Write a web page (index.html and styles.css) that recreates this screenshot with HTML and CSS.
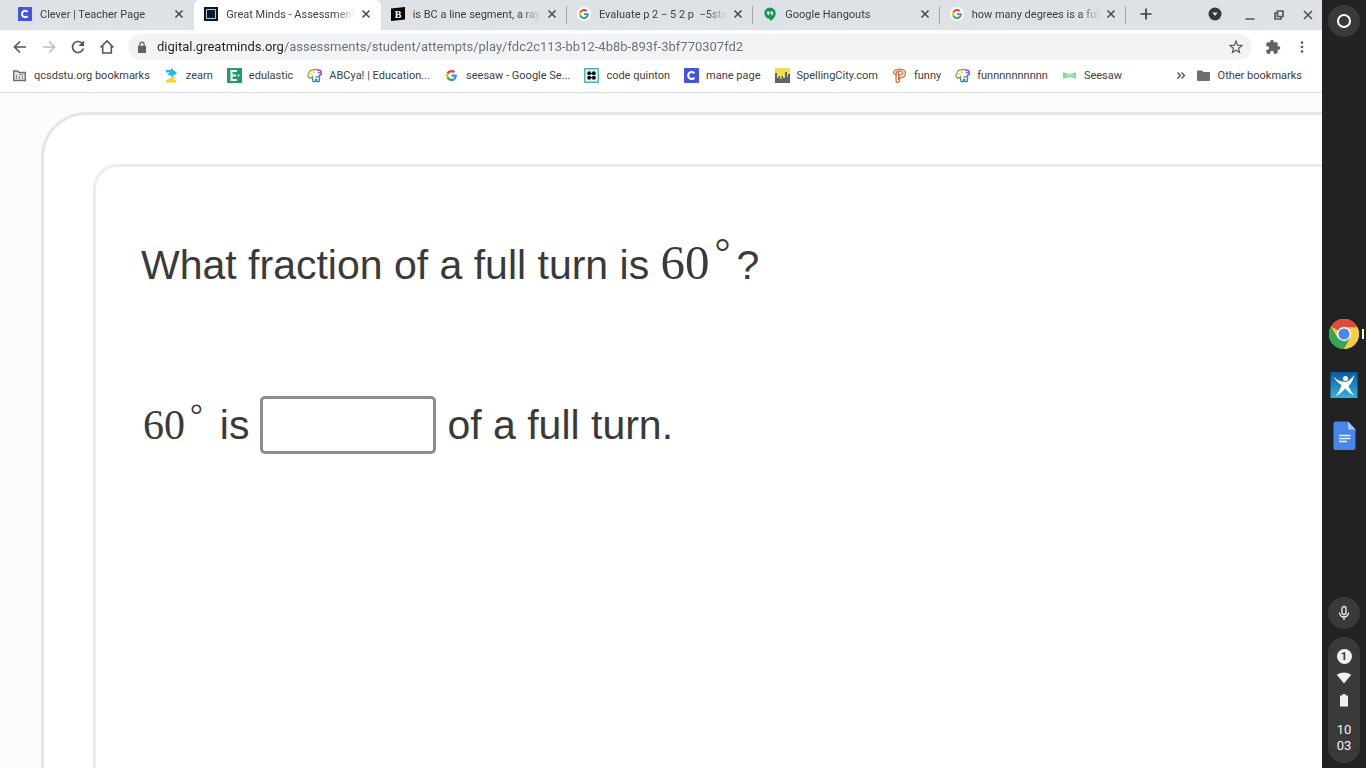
FILE: index.html
```html
<!DOCTYPE html>
<html lang="en">

<head>
    <meta charset="UTF-8">
    <meta name="viewport" content="width=device-width, initial-scale=1.0">
    <title>Great Minds - Assessments</title>
    <link rel="stylesheet" href="styles.css">
</head>

<body>
    <!-- shared icons -->
    <svg class="sprite" aria-hidden="true">
        <symbol id="i-google" viewBox="0 0 48 48">
            <path fill="#ea4335" d="M24 9.5c3.54 0 6.71 1.22 9.21 3.6l6.85-6.85C35.9 2.38 30.47 0 24 0 14.62 0 6.51 5.38 2.56 13.22l7.98 6.19C12.43 13.72 17.74 9.5 24 9.5z"/>
            <path fill="#4285f4" d="M46.98 24.55c0-1.57-.15-3.09-.38-4.55H24v9.02h12.94c-.58 2.96-2.26 5.48-4.78 7.18l7.73 6c4.51-4.18 7.09-10.36 7.09-17.65z"/>
            <path fill="#fbbc05" d="M10.53 28.59c-.48-1.45-.76-2.99-.76-4.59s.27-3.14.76-4.59l-7.98-6.19C.92 16.46 0 20.12 0 24c0 3.88.92 7.54 2.56 10.78l7.97-6.19z"/>
            <path fill="#34a853" d="M24 48c6.48 0 11.93-2.13 15.89-5.81l-7.73-6c-2.15 1.45-4.92 2.3-8.16 2.3-6.26 0-11.57-4.22-13.47-9.91l-7.98 6.19C6.51 42.62 14.62 48 24 48z"/>
        </symbol>
        <symbol id="i-clever" viewBox="0 0 16 16">
            <rect width="16" height="16" rx="1" fill="#4653dc"/>
            <path d="M11 5.6A3.7 3.7 0 1 0 11 10.4" fill="none" stroke="#fff" stroke-width="2.3"/>
        </symbol>
        <symbol id="i-close" viewBox="0 0 14 14">
            <path d="M3.5 3.5l7 7M10.5 3.5l-7 7" stroke="#45494d" stroke-width="1.5" fill="none"/>
        </symbol>
        <symbol id="i-abcya" viewBox="0 0 16 16" fill="none">
            <path d="M4 10.5C1 11 0 7.500 2 6c0-3 3-4.500 5-4 2-1.200 4-.5 4.500 1" stroke="#8f9a3a" stroke-width="1.300"/>
            <path d="M11 2.500c2-.8 4.500.3 4 2.200.8 1.800-.5 3.300-2.500 3" stroke="#b0359b" stroke-width="1.500"/>
            <path d="M11.500 5h3" stroke="#7a4fc4" stroke-width="1.200"/>
            <path d="M3 10.500c2 .5 3-.5 3.500-2" stroke="#d0654d" stroke-width="1.200"/>
            <path d="M3.500 6.500h3M6 4.500h3" stroke="#e2d65c" stroke-width="1.500"/>
            <path d="M5.500 10l1 4.500H9V12h1.500v2.500H13l.5-5H9" stroke="#2986b5" stroke-width="1.300"/>
        </symbol>
    </svg>

    <div class="desktop">
        <div class="browser">
            <header class="tab-strip">
                <nav class="tabs" aria-label="Tabs">
                    <div class="tab">
                        <svg class="favicon"><use href="#i-clever"/></svg>
                        <a href="#" class="tab-title">Clever | Teacher Page</a>
                        <button class="tab-close" aria-label="Close tab"><svg><use href="#i-close"/></svg></button>
                    </div>
                    <div class="tab active">
                        <svg class="favicon" viewBox="0 0 14 14">
                            <path d="M0 0h14v14H0z" fill="#081a26"/>
                            <path d="M2.500 2.500h9v9h-9z" fill="none" stroke="#b9cbd4"/>
                        </svg>
                        <a href="#" class="tab-title">Great Minds - Assessments</a>
                        <button class="tab-close" aria-label="Close tab"><svg><use href="#i-close"/></svg></button>
                    </div>
                    <div class="tab">
                        <svg class="favicon" viewBox="0 0 14 14">
                            <path d="M0 1.500L14 0v12.500L0 14z" fill="#050505"/>
                            <text x="7" y="11" class="mark-b">B</text>
                        </svg>
                        <a href="#" class="tab-title">is BC a line segment, a ray,</a>
                        <button class="tab-close" aria-label="Close tab"><svg><use href="#i-close"/></svg></button>
                    </div>
                    <div class="tab">
                        <svg class="favicon" viewBox="0 0 14 14">
                            <circle cx="7" cy="7" r="7" fill="#fff"/>
                            <use href="#i-google" x="2" y="2" width="10" height="10"/>
                        </svg>
                        <a href="#" class="tab-title">Evaluate p 2 − 5 2 p &nbsp;−5sta</a>
                        <button class="tab-close" aria-label="Close tab"><svg><use href="#i-close"/></svg></button>
                    </div>
                    <div class="tab">
                        <svg class="favicon" viewBox="0 0 14 14">
                            <path d="M7 .5a5.700 5.700 0 0 1 5.700 5.700c0 3.300-2.500 6.300-5.700 7.800v-2.100A5.700 5.700 0 0 1 7 .5z" fill="#12995a"/>
                            <path d="M4 4.600h2.400V7L5.300 8.400H4.600L5.200 7H4zM7.600 4.600H10V7L8.900 8.400h-.7L8.800 7H7.600z" fill="#fff"/>
                        </svg>
                        <a href="#" class="tab-title">Google Hangouts</a>
                        <button class="tab-close" aria-label="Close tab"><svg><use href="#i-close"/></svg></button>
                    </div>
                    <div class="tab">
                        <svg class="favicon" viewBox="0 0 14 14">
                            <circle cx="7" cy="7" r="7" fill="#fff"/>
                            <use href="#i-google" x="2" y="2" width="10" height="10"/>
                        </svg>
                        <a href="#" class="tab-title">how many degrees is a full</a>
                        <button class="tab-close" aria-label="Close tab"><svg><use href="#i-close"/></svg></button>
                    </div>
                </nav>
                <div class="window-controls">
                    <button class="new-tab" aria-label="New tab">
                        <svg viewBox="0 0 14 14"><path d="M7 1.500v11M1.500 7h11" stroke="#3c4043" stroke-width="1.700"/></svg>
                    </button>
                    <button class="search-tabs" aria-label="Search tabs">
                        <svg viewBox="0 0 14 14"><circle cx="7" cy="7" r="6.500" fill="#35383b"/><path d="M4.300 5.500h5.400L7 9z" fill="#dee1e6"/></svg>
                    </button>
                    <button aria-label="Minimize">
                        <svg viewBox="0 0 14 14"><path d="M2.500 12h9" stroke="#5f6368" stroke-width="1.700"/></svg>
                    </button>
                    <button aria-label="Restore">
                        <svg viewBox="0 0 14 14"><path d="M5.500 4h5.500v5.500H5.500zM5 6H3v6h6v-2" fill="none" stroke="#54585c" stroke-width="1.700"/></svg>
                    </button>
                    <button aria-label="Close window">
                        <svg viewBox="0 0 14 14"><path d="M3 4l8 8M11 4l-8 8" stroke="#54585c" stroke-width="1.700"/></svg>
                    </button>
                </div>
            </header>

            <div class="toolbar">
                <button aria-label="Back">
                    <svg viewBox="0 0 16 16"><path d="M14 8H3M8 2.500L2.500 8 8 13.500" fill="none" stroke="#54585c" stroke-width="1.700"/></svg>
                </button>
                <button aria-label="Forward" disabled>
                    <svg viewBox="0 0 16 16"><path d="M2 8h11M8 2.500L13.500 8 8 13.500" fill="none" stroke="#bcbec1" stroke-width="1.700"/></svg>
                </button>
                <button aria-label="Reload">
                    <svg viewBox="0 0 16 16"><path d="M13.300 9.500A5.500 5.500 0 1 1 12 4.200" fill="none" stroke="#54585c" stroke-width="1.700"/><path d="M14 1.500V7H8.500z" fill="#54585c"/></svg>
                </button>
                <button aria-label="Home">
                    <svg viewBox="0 0 16 16"><path d="M1.500 8.500L8 2l6.500 6.500M3.700 7v7h8.600V7" fill="none" stroke="#54585c" stroke-width="1.600"/></svg>
                </button>
                <div class="omnibox">
                    <svg class="lock" viewBox="0 0 12 12"><path d="M2 4.800h8V12H2z" fill="#5f6368"/><path d="M3.900 5V3.200a2.100 2.100 0 0 1 4.200 0V5" fill="none" stroke="#5f6368" stroke-width="1.200"/></svg>
                    <input type="text" class="address" aria-label="Address" value="digital.greatminds.org/assessments/student/attempts/play/fdc2c113-bb12-4b8b-893f-3bf770307fd2">
                    <button aria-label="Bookmark this page">
                        <svg viewBox="0 0 16 16"><path d="M8 2.200l1.600 4 4.300.3-3.300 2.800 1 4.200L8 11.200l-3.600 2.300 1-4.200-3.300-2.800 4.300-.3z" fill="none" stroke="#54585c" stroke-width="1.200"/></svg>
                    </button>
                </div>
                <button aria-label="Extensions">
                    <svg viewBox="0 0 24 24"><path d="M20.500 11H19V7c0-1.100-.9-2-2-2h-4V3.500a2.500 2.500 0 0 0-5 0V5H4c-1.100 0-2 .9-2 2v3.800h1.500a2.700 2.700 0 0 1 0 5.400H2V20c0 1.100.9 2 2 2h3.800v-1.500a2.700 2.700 0 0 1 5.400 0V22H17c1.100 0 2-.9 2-2v-4h1.500a2.500 2.500 0 0 0 0-5z" fill="#5f6368"/></svg>
                </button>
                <button aria-label="Menu">
                    <svg viewBox="0 0 16 16" fill="#54585c"><circle cx="8" cy="3.500" r="1.300"/><circle cx="8" cy="8" r="1.300"/><circle cx="8" cy="12.500" r="1.300"/></svg>
                </button>
            </div>

            <nav class="bookmarks" aria-label="Bookmarks">
                <a href="#">
                    <svg viewBox="0 0 15 15"><path d="M1.700 3h4l1.300 1.500h6.300v8H1.700z" fill="#e3e4e5" stroke="#6d7073" stroke-width="1.400"/><path d="M4.500 7v4M7 6.500h4M7.500 8v3M10.500 8v3" stroke="#8b8e91"/></svg>
                    qcsdstu.org bookmarks
                </a>
                <a href="#">
                    <svg viewBox="0 0 15 15"><path d="M2 2h5V0l6 5-6 4.500V7H3l3-2.500H2z" fill="#22b8e2"/><path d="M9.500 8.500L12 9.500 8 12h4v2.500H2V12.500z" fill="#fbd22c"/></svg>
                    zearn
                </a>
                <a href="#">
                    <svg viewBox="0 0 15 15"><path d="M0 0h15v15H0z" fill="#239b6c"/><path d="M10 3H4.500v9H10M4.500 7.500H9" fill="none" stroke="#fff" stroke-width="2"/><circle cx="11.500" cy="7.500" r="1" fill="#fff"/></svg>
                    edulastic
                </a>
                <a href="#"><svg><use href="#i-abcya"/></svg>ABCya! | Education...</a>
                <a href="#">
                    <svg viewBox="0 0 15 15"><use href="#i-google" x="2" y="2" width="11" height="11"/></svg>
                    seesaw - Google Se...
                </a>
                <a href="#">
                    <svg viewBox="0 0 15 15"><path d="M.7.7h13.600v13.600H.7z" fill="#e5f6f5" stroke="#56b3b2" stroke-width="1.400"/><path d="M4.500 5.500h6M4.500 9.500h6" stroke="#111"/><g fill="#111"><circle cx="5.200" cy="5.200" r="2"/><circle cx="9.800" cy="5.200" r="2"/><circle cx="5.200" cy="9.800" r="2"/><circle cx="9.800" cy="9.800" r="2"/></g></svg>
                    code quinton
                </a>
                <a href="#"><svg><use href="#i-clever"/></svg>mane page</a>
                <a href="#">
                    <svg viewBox="0 0 15 15"><path d="M0 0h15v15H0z" fill="#f0df4d"/><path d="M0 15V5h2v5h1.500V8H5v3h1.500V8H8v2h2V4h2v5h1V6h2v9z" fill="#53676e"/></svg>
                    SpellingCity.com
                </a>
                <a href="#">
                    <svg viewBox="0 0 15 15" fill="none" stroke="#dc6d42" stroke-width="1.300"><path d="M1.500 5.500C1 0 13.500-.5 13.500 5c0 4-4 5.500-6 4.500v3c0 2.500-3.500 2.500-3.500 0V6"/><path d="M4 7C3.500 2 10.500 2 10.500 5c0 2.500-3 2.500-4 1.500M6.500 4v8M1.500 5.500l2.500 1"/></svg>
                    funny
                </a>
                <a href="#"><svg><use href="#i-abcya"/></svg>funnnnnnnnnn</a>
                <a href="#">
                    <svg viewBox="0 0 15 15"><path d="M1 4l5.500 2h2L14 4v7L8.500 9h-2L1 11z" fill="#86dc9c"/><path d="M3 7.500h9" stroke="#c5e59a"/></svg>
                    Seesaw
                </a>
                <button class="overflow" aria-label="More bookmarks">
                    <svg viewBox="0 0 15 15"><path d="M4.500 4.500l3 3-3 3M8.500 4.500l3 3-3 3" fill="none" stroke="#45494d" stroke-width="1.300"/></svg>
                </button>
                <a href="#">
                    <svg viewBox="0 0 15 15"><path d="M1 3.500q0-1 1-1h4L7.500 4H13q1 0 1 1v7q0 1-1 1H2q-1 0-1-1z" fill="#6d7073"/></svg>
                    Other bookmarks
                </a>
            </nav>

            <main class="page">
                <section class="sheet">
                    <form class="question">
                        <p class="prompt">What fraction of a full turn is <span class="math">60<sup>°</sup></span>?</p>
                        <label class="answer" for="fraction">
                            <span class="math">60<sup>°</sup></span>
                            <span>is</span>
                            <input type="text" id="fraction">
                            <span>of a full turn.</span>
                        </label>
                    </form>
                </section>
            </main>
        </div>

        <aside class="shelf">
            <button class="round" aria-label="Launcher">
                <svg viewBox="0 0 16 16"><circle cx="8" cy="8" r="6" fill="none" stroke="#fff" stroke-width="2"/></svg>
            </button>
            <div class="apps">
                <button class="running" aria-label="Chrome">
                    <svg viewBox="0 0 48 48">
                        <circle cx="24" cy="24" r="24" fill="#fdcc3d"/>
                        <path d="M24 24L3.200 12A24 24 0 0 1 44.800 12z" fill="#e04a3f"/>
                        <path d="M3.200 12A24 24 0 0 0 24 48l10.400-18L24 24l-10.400 6z" fill="#35a457"/>
                        <path d="M24 13h21.300A24 24 0 0 1 24 48l10-18z" fill="#fdcc3d"/>
                        <circle cx="24" cy="24" r="11.500" fill="#f2f6fb"/>
                        <circle cx="24" cy="24" r="8.800" fill="#4a86e8"/>
                    </svg>
                </button>
                <button aria-label="Whiteboard">
                    <svg viewBox="0 0 30 30">
                        <defs>
                            <linearGradient id="board" x1="0" y1="0" x2="0" y2="1">
                                <stop offset="0" stop-color="#0c5a9e"/>
                                <stop offset="1" stop-color="#2fb4e2"/>
                            </linearGradient>
                        </defs>
                        <path d="M1.500 2h27v26h-27z" fill="url(#board)"/>
                        <path d="M4.500 6.500q4 4.500 8.500 5l4 .5Q22 10 25.500 4.500 24 12 19.500 16q2 5 5.500 9.500-5-2.500-9-7-4 5.500-9.500 7.500 4.500-5 6-11Q7 12 4.500 6.500z" fill="#fff"/>
                        <circle cx="16.500" cy="8.500" r="2.500" fill="#fff"/>
                    </svg>
                </button>
                <button aria-label="Docs">
                    <svg viewBox="0 0 30 30">
                        <path d="M6.500.5H19l7.500 8V27q0 2-2 2h-18q-2 0-2-2V2.500q0-2 2-2z" fill="#4986e8"/>
                        <path d="M19 .5l7.500 8H19z" fill="#a7c5f7"/>
                        <path d="M10 14.500h11.500M10 17.500h11.500M10 20.500h8" stroke="#e9f0fd" stroke-width="1.500"/>
                    </svg>
                </button>
            </div>
            <div class="status">
                <button class="round" aria-label="Dictation">
                    <svg viewBox="0 0 16 16" fill="none" stroke="#f1f1f1" stroke-width="1.300"><rect x="6" y="1.500" width="4" height="8" rx="2"/><path d="M3.500 7.500a4.500 4.500 0 0 0 9 0M8 12v3"/></svg>
                </button>
                <button class="tray" aria-label="Status tray">
                    <span class="count">1</span>
                    <svg viewBox="0 0 16 16"><path d="M.8 4.800Q8 0 15.200 4.800L8 13.500z" fill="#f1f1f1"/></svg>
                    <svg viewBox="0 0 16 16"><path d="M4 3.500h2.500V2h3v1.500H12V14.500H4z" fill="#f1f1f1"/></svg>
                    <time>10<br>03</time>
                </button>
            </div>
        </aside>
    </div>
</body>

</html>
```

FILE: styles.css
```css
:root {
    --strip: #dee1e6;
    --text: #3c4043;
    --shelf: #222222;
    --shelf-light: #3a3a3a;
}

* {
    box-sizing: border-box;
    margin: 0;
    padding: 0;
}

body {
    font-family: Roboto, "Liberation Sans", sans-serif;
    font-size: 11px;
    color: var(--text);
    background: #fff;
}

button {
    font: inherit;
    color: inherit;
    background: none;
    border: none;
    display: flex;
    align-items: center;
    justify-content: center;
    flex: none;
}

a {
    color: inherit;
    text-decoration: none;
}

svg {
    display: block;
    flex: none;
}

.sprite {
    position: absolute;
    width: 0;
    height: 0;
}

.desktop {
    display: flex;
    height: 100vh;
    overflow: hidden;
}

.browser {
    flex: 1;
    min-width: 0;
    display: flex;
    flex-direction: column;
}

/* tab strip */
.tab-strip {
    display: flex;
    height: 30px;
    padding-left: 8px;
    background: var(--strip);
}

.tabs {
    flex: 1;
    min-width: 0;
    display: flex;
}

.tab {
    flex: 1 1 0;
    min-width: 0;
    display: flex;
    align-items: center;
    padding: 0 8px 2px 10px;
    border-radius: 6px 6px 0 0;
    background: linear-gradient(#a3a6aa, #a3a6aa) right 6px / 1px 18px no-repeat;
}

.tab:first-child {
    background: none;
}

.tab.active {
    background: #fff;
}

.favicon {
    width: 14px;
    height: 14px;
    margin-right: 8px;
}

.tab-title {
    flex: 1;
    min-width: 0;
    margin-right: 4px;
    overflow: hidden;
    white-space: nowrap;
    -webkit-mask-image: linear-gradient(90deg, #000 calc(100% - 20px), transparent);
    mask-image: linear-gradient(90deg, #000 calc(100% - 20px), transparent);
}

.tab-close svg,
.window-controls svg {
    width: 14px;
    height: 14px;
}

.mark-b {
    font: bold 10px "Liberation Serif", serif;
    fill: #fff;
    text-anchor: middle;
}

.window-controls {
    width: 196px;
    display: flex;
    align-items: center;
    justify-content: flex-end;
    gap: 15px;
    padding: 0 7px 2px 13px;
}

.new-tab {
    margin-right: auto;
}

.search-tabs {
    margin-right: 6px;
}

/* toolbar */
.toolbar {
    display: flex;
    align-items: center;
    gap: 13px;
    height: 33px;
    padding: 0 12px;
}

.toolbar svg {
    width: 16px;
    height: 16px;
}

.omnibox {
    flex: 1;
    display: flex;
    align-items: center;
    height: 26px;
    padding: 0 8px;
    border-radius: 13px;
    background: #f1f3f4;
}

.omnibox .lock {
    width: 12px;
    height: 12px;
    margin-right: 9px;
}

/* the host part is darker than the path */
.address {
    flex: 1;
    min-width: 0;
    border: none;
    outline: none;
    font: 13px Roboto, "Liberation Sans", sans-serif;
    color: transparent;
    background: linear-gradient(90deg, #202124 126px, #6a6e73 126px);
    -webkit-background-clip: text;
    background-clip: text;
}

/* bookmarks bar */
.bookmarks {
    display: flex;
    align-items: center;
    gap: 14px;
    height: 30px;
    padding: 0 20px 4px 12px;
    border-bottom: 1px solid #dcdde0;
    white-space: nowrap;
}

.bookmarks a {
    display: flex;
    align-items: center;
    gap: 7px;
}

.bookmarks svg {
    width: 15px;
    height: 15px;
}

.overflow {
    margin-left: auto;
    margin-right: -6px;
}

/* assessment page */
.page {
    flex: 1;
    min-height: 0;
    display: flex;
    padding: 19px 0 0 41px;
    background: #fcfcfc;
}

.sheet {
    flex: 1;
    display: flex;
    padding: 49px 0 0 49px;
    border: solid #e5e5ea;
    border-width: 3px 0 0 3px;
    border-top-left-radius: 45px;
    background: #fff;
}

.question {
    flex: 1;
    padding: 67px 0 0 45px;
    border: solid #ededee;
    border-width: 3px 0 0 3px;
    border-top-left-radius: 24px;
    font-family: "Liberation Sans", Arial, sans-serif;
    font-size: 41px;
    line-height: 58px;
    color: #3a3a3a;
}

.math {
    font-family: "Liberation Serif", serif;
}

.math sup {
    padding: 0 6px 0 5px;
    line-height: 0;
    vertical-align: 13px;
}

.prompt {
    height: 58px;
}

.prompt .math {
    font-size: 49px;
}

.prompt sup {
    font-size: 40px;
}

.answer {
    display: flex;
    align-items: center;
    gap: 11px;
    margin-top: 104px;
}

.answer .math {
    padding-left: 2px;
    font-size: 42px;
}

.answer sup {
    font-size: 32px;
}

.answer input {
    width: 176px;
    height: 58px;
    padding: 0 10px;
    border: 3px solid #8d8d8d;
    border-radius: 5px;
    background: #fff;
    font: inherit;
    color: inherit;
}

/* shelf */
.shelf {
    width: 44px;
    display: grid;
    grid-template-rows: 1fr auto 1fr;
    justify-items: center;
    padding: 5px 0;
    background: var(--shelf);
}

.round {
    width: 32px;
    height: 32px;
    border-radius: 50%;
    background: var(--shelf-light);
}

.round svg,
.tray svg {
    width: 16px;
    height: 16px;
}

.apps {
    width: 100%;
    display: flex;
    flex-direction: column;
    align-items: center;
    gap: 21px;
    padding-top: 2px;
}

.apps button {
    width: 100%;
}

.apps svg {
    width: 30px;
    height: 30px;
}

.running {
    position: relative;
}

.running::after {
    content: "";
    position: absolute;
    right: 2px;
    top: 10px;
    width: 2px;
    height: 10px;
    background: #fff;
}

.status {
    align-self: end;
    display: flex;
    flex-direction: column;
    gap: 8px;
}

.tray {
    width: 32px;
    height: 126px;
    flex-direction: column;
    justify-content: flex-start;
    gap: 6px;
    padding-top: 12px;
    border-radius: 16px;
    background: var(--shelf-light);
    color: #f1f1f1;
}

.count {
    width: 15px;
    height: 15px;
    border-radius: 50%;
    background: #f1f1f1;
    color: #333;
    font-weight: bold;
    line-height: 15px;
}

.tray time {
    padding-top: 8px;
    font-size: 13px;
    line-height: 16px;
}
```
